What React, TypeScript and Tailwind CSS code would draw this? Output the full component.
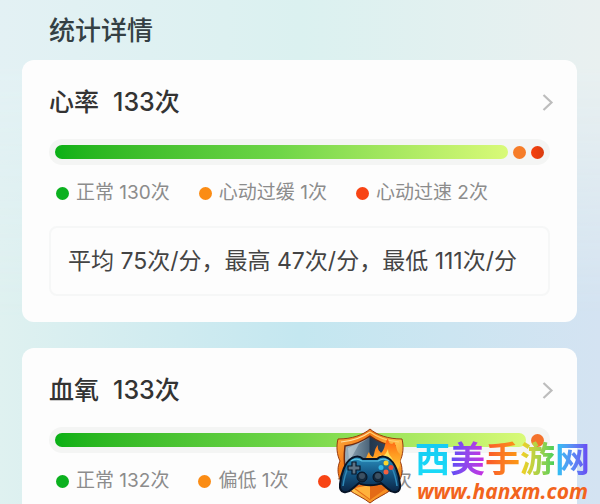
import { ReactNode } from 'react';

type Item = { label: string; count: number; dot: string };

const heartItems: Item[] = [
  { label: '正常', count: 130, dot: 'bg-[#0bb11f]' },
  { label: '心动过缓', count: 1, dot: 'bg-[#fb8c14]' },
  { label: '心动过速', count: 2, dot: 'bg-[#f84414]' },
];

const oxygenItems: Item[] = [
  { label: '正常', count: 132, dot: 'bg-[#0bb11f]' },
  { label: '偏低', count: 1, dot: 'bg-[#fb8c14]' },
  { label: '低氧', count: 0, dot: 'bg-[#f84414]' },
];

function Track({ dots }: { dots: string[] }) {
  return (
    <div className="mt-[18px] flex h-[26px] items-center gap-[5px] rounded-full bg-[#f4f5f4] px-[6px]">
      <div className="h-[14px] flex-1 rounded-full bg-linear-to-r from-[#07b015] via-[#6fd648] to-[#d9fa78]" />
      {dots.map((dot) => (
        <div key={dot} className={`size-[13px] rounded-full ${dot}`} />
      ))}
    </div>
  );
}

function Card({ title, total, items, dots, children }: {
  title: string;
  total: number;
  items: Item[];
  dots: string[];
  children?: ReactNode;
}) {
  return (
    <section className="rounded-xl bg-[#fdfdfd] px-[27px] pt-[25px] pb-[26px]">
      <div className="flex h-9 items-center justify-between">
        <h2 className="flex gap-[14px] text-[25px] font-medium text-[#333]">
          <span>{title}</span>
          <span>{total}次</span>
        </h2>
        <button type="button" aria-label={`查看${title}`} className="-mr-1 text-[#bdbdbd]">
          <svg viewBox="0 0 12 20" className="h-5 w-3" fill="none" stroke="currentColor" strokeWidth="2.2">
            <path d="M1.500 2L9.500 9.500L1.500 17" />
          </svg>
        </button>
      </div>
      <Track dots={dots} />
      <ul className="mt-[13px] flex h-[30px] items-center gap-[29px] pl-[7px] text-[19px] whitespace-nowrap text-[#8c8c8c]">
        {items.map((item) => (
          <li key={item.label} className="flex items-center gap-[7px]">
            <span className={`size-[13px] rounded-full ${item.dot}`} />
            <span>{item.label} {item.count}次</span>
          </li>
        ))}
      </ul>
      {children}
    </section>
  );
}

function Shield() {
  return (
    <svg viewBox="0 0 70 76" className="h-[76px] w-[70px] shrink-0">
      <defs>
        <linearGradient id="rim" x1="0" y1="0" x2="1" y2="1">
          <stop offset="0" stopColor="#ffb648" />
          <stop offset="0.300" stopColor="#f47a16" />
          <stop offset="0.550" stopColor="#ffc04a" />
          <stop offset="0.800" stopColor="#f58a1e" />
          <stop offset="1" stopColor="#d9500f" />
        </linearGradient>
        <linearGradient id="steel" x1="0" y1="0" x2="1" y2="0">
          <stop offset="0" stopColor="#9db3c0" />
          <stop offset="0.480" stopColor="#4c657a" />
          <stop offset="0.500" stopColor="#22364c" />
          <stop offset="1" stopColor="#3a5068" />
        </linearGradient>
        <linearGradient id="pad" x1="0" y1="0" x2="0" y2="1">
          <stop offset="0" stopColor="#2a8fbe" />
          <stop offset="0.450" stopColor="#165a88" />
          <stop offset="1" stopColor="#0a2444" />
        </linearGradient>
        <linearGradient id="fire" x1="0" y1="0" x2="0" y2="1">
          <stop offset="0" stopColor="#ff5a10" />
          <stop offset="0.500" stopColor="#ff9a20" />
          <stop offset="1" stopColor="#ffc83a" />
        </linearGradient>
      </defs>
      <path d="M35 1C28 7 17 11 3 11C1 19 2 27 5 33C0 44 5 56 14 62C21 67 29 70 35 75C41 70 49 67 56 62C65 56 70 44 65 33C68 27 69 19 67 11C53 11 42 7 35 1Z" fill="url(#rim)" stroke="#9a3a0e" strokeWidth="1" />
      <path d="M35 4C28 9 18 13 6 14" fill="none" stroke="#ffe0a0" strokeWidth="1.200" />
      <path d="M35 4C42 9 52 13 64 14" fill="none" stroke="#ffcf70" strokeWidth="1.200" />
      <path d="M35 8C28 13 19 17 10 18C8 36 10 48 19 56L35 66L51 56C60 48 62 36 60 18C51 17 42 13 35 8Z" fill="url(#steel)" stroke="#6e2a10" strokeWidth="1.500" />
      <path d="M34 10L24 16L14 34L13 20Z" fill="#dbe6ea" opacity="0.450" />
      <path d="M28 36C31 33 31 28 34 24C35 27 36 28 38 29C40 25 39 21 43 17C42 22 45 23 46 25C51 20 49 15 53 10C53 15 57 18 59 14C62 18 61 23 65 26C66 32 65 40 62 42L30 40Z" fill="url(#fire)" />
      <path d="M41 34C43 31 44 29 45 27C48 30 51 26 53 21C53 28 57 28 58 33Z" fill="#ffdf5a" />
      <path d="M12 52L24 57H46L58 52L52 60L35 72L18 60Z" fill="#e46a16" />
      <path d="M35 57V71L20 60Z" fill="#ffb23c" />
      <path d="M17 30C21 28 25 28 28 31H42C45 28 49 28 53 30C60 34 64 46 65 56C66 66 58 66 53 61L46 55C42 58 28 58 24 55L17 61C12 66 4 66 5 56C6 46 10 34 17 30Z" fill="url(#pad)" stroke="#071426" strokeWidth="2" />
      <path d="M16 33C20 30 24 31 27 33H43C46 31 50 30 54 33" fill="none" stroke="#5cc4e2" strokeWidth="1.200" />
      <path d="M8 58C9 51 11 44 13 40" fill="none" stroke="#2f8ab8" strokeWidth="1.500" />
      <path d="M62 58C61 51 59 44 57 40" fill="none" stroke="#2f8ab8" strokeWidth="1.500" />
      <path d="M17 34h4v4h4v4h-4v4h-4v-4h-4v-4h4Z" fill="#5d7284" stroke="#06172a" strokeWidth="1.200" />
      <circle cx="27" cy="49" r="5" fill="#14293c" stroke="#061222" strokeWidth="1" />
      <circle cx="27" cy="48" r="3" fill="#3c5062" />
      <circle cx="43" cy="49" r="5" fill="#14293c" stroke="#061222" strokeWidth="1" />
      <circle cx="43" cy="48" r="3" fill="#3c5062" />
      <circle cx="51" cy="35" r="2.500" fill="#ffd52b" />
      <circle cx="46" cy="39.500" r="2.500" fill="#31b8e8" />
      <circle cx="56" cy="39.500" r="2.500" fill="#ef4938" />
      <circle cx="51" cy="44" r="2.500" fill="#f4603f" />
    </svg>
  );
}

function Watermark() {
  return (
    <div className="absolute right-[10px] bottom-0 flex items-start">
      <Shield />
      <div className="mt-[11px] ml-[10px] flex flex-col items-center">
        <div className="flex text-[35px] leading-10 font-bold text-transparent">
          <span className="bg-linear-to-b from-[#16c8f2] to-[#1cdcf8] bg-clip-text">西</span>
          <span className="bg-linear-to-r from-[#5a4cf5] to-[#c92be0] bg-clip-text">美</span>
          <span className="bg-linear-to-r from-[#f9522a] to-[#fb9a12] bg-clip-text">手</span>
          <span className="bg-linear-to-r from-[#f7cf1c] to-[#39cf5c] bg-clip-text">游</span>
          <span className="bg-linear-to-r from-[#1cc8f2] to-[#6a3cf2] bg-clip-text">网</span>
        </div>
        <a href="#" className="font-['Open_Sans',sans-serif] text-[21px] leading-6 font-bold text-[#f2641c] italic">
          www.hanxm.com
        </a>
      </div>
    </div>
  );
}

export default function App() {
  return (
    <main className="relative h-screen overflow-hidden bg-linear-to-r from-[#dff1f0] via-[#c4e7f0] to-[#d4e3f2] px-[22px] font-[Inter,'Noto_Sans_CJK_SC',sans-serif]">
      <div className="absolute inset-x-0 top-0 h-80 bg-linear-to-r from-[#e3f1f4] via-[#dbf1f0] to-[#e9f0f0] mask-b-from-20% mask-b-to-100%" />
      <div className="relative pr-px">
        <h1 className="flex h-[60px] items-center pl-[27px] text-[26px] font-medium text-[#344044]">统计详情</h1>
        <div className="flex flex-col gap-[26px]">
          <Card title="心率" total={133} items={heartItems} dots={['bg-[#f67c28]', 'bg-linear-to-r from-[#f8400c] to-[#d83c10]']}>
            <p className="mt-[18px] flex h-[70px] items-center rounded-lg border-2 border-[#f6f7f7] px-[17px] text-[23px] whitespace-nowrap text-[#444]">
              平均 75次/分，最高 47次/分，最低 111次/分
            </p>
          </Card>
          <Card title="血氧" total={133} items={oxygenItems} dots={['bg-[#f4722c]']} />
        </div>
      </div>
      <Watermark />
    </main>
  );
}
